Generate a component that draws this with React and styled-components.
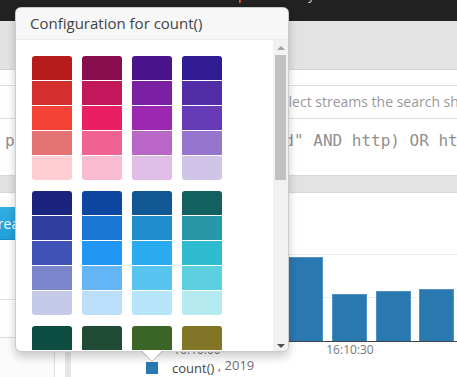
import styled, { createGlobalStyle } from "styled-components"

const palettes = [
    [
        ["#b71c1c", "#d32f2f", "#f44336", "#e57373", "#ffcdd2"],
        ["#880e4f", "#c2185b", "#e91e63", "#f06292", "#f8bbd0"],
        ["#4a148c", "#7b1fa2", "#9c27b0", "#ba68c8", "#e1bee7"],
        ["#311b92", "#512da8", "#673ab7", "#9575cd", "#d1c4e9"],
    ],
    [
        ["#1a237e", "#303f9f", "#3f51b5", "#7986cb", "#c5cae9"],
        ["#0d47a1", "#1976d2", "#2196f3", "#64b5f6", "#bbdefb"],
        ["#0f5894", "#1f8ccc", "#2aabef", "#58c4f2", "#b6e5fa"],
        ["#136060", "#2898a8", "#30bcd0", "#5ccfe0", "#b5ebf0"],
    ],
    [
        ["#0e4d41", "#00796b", "#009688", "#4db6ac", "#b2dfdb"],
        ["#204b34", "#388e3c", "#4caf50", "#81c784", "#c8e6c9"],
        ["#3a6526", "#689f38", "#8bc34a", "#aed581", "#dcedc8"],
        ["#827526", "#afb42b", "#cddc39", "#dce775", "#f0f4c3"],
    ],
    [
        ["#f57f17", "#fbc02d", "#ffeb3b", "#fff176", "#fff9c4"],
        ["#ff6f00", "#ffa000", "#ffc107", "#ffd54f", "#ffecb3"],
        ["#e65100", "#f57c00", "#ff9800", "#ffb74d", "#ffe0b2"],
        ["#bf360c", "#e64a19", "#ff5722", "#ff8a65", "#ffccbc"],
    ],
    [
        ["#3e2723", "#5d4037", "#795548", "#a1887f", "#d7ccc8"],
        ["#212121", "#616161", "#9e9e9e", "#e0e0e0", "#f5f5f5"],
        ["#263238", "#455a64", "#607d8b", "#90a4ae", "#cfd8dc"],
        ["#000000", "#424242", "#757575", "#bdbdbd", "#eeeeee"],
    ],
]

// bar x / top in chart coordinates (chart starts at x=71, y=193)
const bars = [
    { x: 85, top: 90 }, { x: 129, top: 80 }, { x: 173, top: 70 },
    { x: 217, top: 64 }, { x: 261, top: 101 }, { x: 305, top: 98 }, { x: 348, top: 96 },
]

export default function App() {
    return (
        <>
            <GlobalStyle />
            <NavBar>
                <NavLink $active style={{ marginLeft: 203 }}>Enterprise</NavLink>
                <NavLink style={{ marginLeft: 30 }}>System</NavLink>
            </NavBar>
            <Page>
                <SearchPanel>
                    <TopRow />
                    <StreamsRow>Select streams the search should include. Searches in all streams if empty.</StreamsRow>
                    <QueryRow>process:nginx OR (source:"prod" AND http) OR https</QueryRow>
                </SearchPanel>
                <Results>
                    <Sidebar>
                        <ButtonArea>
                            <CreateButton>Create new</CreateButton>
                        </ButtonArea>
                        <SideItem />
                        <SideRest />
                    </Sidebar>
                    <Gutter />
                    <ChartArea>
                        <svg width="386" height="165">
                            <line x1="0" x2="386" y1="61.5" y2="61.5" stroke="#ececec" />
                            <line x1="0" x2="386" y1="104.5" y2="104.5" stroke="#ececec" />
                            {bars.map((b) => (
                                <rect key={b.x} x={b.x + 0.5} y={b.top + 0.5} width="34" height={148 - b.top} fill="#2a78b0" stroke="#4f92c4" />
                            ))}
                            <line x1="0" x2="386" y1="148.5" y2="148.5" stroke="#444" />
                            <AxisLabel x="126" y="161" textAnchor="middle">16:10:00</AxisLabel>
                            <AxisLabel x="279" y="161" textAnchor="middle">16:10:30</AxisLabel>
                        </svg>
                        <Legend>
                            <LegendSwatch />
                            <LegendLabel>count()</LegendLabel>
                            <LegendDate>Mar 12, 2019</LegendDate>
                        </Legend>
                    </ChartArea>
                </Results>
            </Page>

            <Popover>
                <PopoverTitle>Configuration for count()</PopoverTitle>
                <PopoverBody>
                    <SwatchList>
                        {palettes.map((group, gi) => (
                            <SwatchGroup key={gi}>
                                {group.map((column, ci) => (
                                    <SwatchColumn key={ci}>
                                        {column.map((c) => <Swatch key={c} $color={c} />)}
                                    </SwatchColumn>
                                ))}
                            </SwatchGroup>
                        ))}
                    </SwatchList>
                    <ScrollTrack>
                        <ScrollButton><ScrollArrow $up /></ScrollButton>
                        <ScrollThumb />
                        <ScrollSpace />
                        <ScrollButton><ScrollArrow /></ScrollButton>
                    </ScrollTrack>
                </PopoverBody>
                <Arrow />
            </Popover>
        </>
    )
}

const GlobalStyle = createGlobalStyle`
    html, body {
        margin: 0;
        padding: 0;
        height: 100%;
        overflow: hidden;
        background: #e3e3e3;
        font-family: "Open Sans", "Noto Sans", sans-serif;
    }
`

const NavBar = styled.div`
    height: 21px;
    background: #222222;
    display: flex;
    overflow: hidden;
`

const NavLink = styled.span`
    font-size: 14px;
    line-height: 20px;
    margin-top: -16px;
    color: ${(p) => (p.$active ? "#e8913a" : "#c8c8c8")};
`

const Page = styled.div`
    padding-top: 48px;
`

const SearchPanel = styled.div`
    background: #ffffff;
    border-top: 1px solid #d4d4d4;
    border-bottom: 1px solid #d8d8d8;
`

const TopRow = styled.div`
    height: 15px;
    border-bottom: 1px solid #dddddd;
`

const StreamsRow = styled.div`
    height: 32px;
    border-bottom: 1px solid #dddddd;
    padding-left: 273px;
    font-size: 14px;
    line-height: 32px;
    color: #999999;
    white-space: nowrap;
    overflow: hidden;
`

const QueryRow = styled.div`
    height: 56px;
    padding-left: 5px;
    padding-top: 12px;
    box-sizing: border-box;
    font-family: "DejaVu Sans Mono", "Liberation Mono", monospace;
    font-size: 16px;
    color: #8f8f8f;
    white-space: nowrap;
    overflow: hidden;
`

const Results = styled.div`
    margin-top: 16px;
    background: #ffffff;
    border-top: 1px solid #d8d8d8;
    display: flex;
    height: 184px;
`

const Sidebar = styled.div`
    width: 55px;
    border-right: 1px solid #dddddd;
    display: flex;
    flex-direction: column;
    overflow: hidden;
`

const ButtonArea = styled.div`
    height: 107px;
    padding-top: 14px;
    box-sizing: border-box;
    border-bottom: 1px solid #e4e4e4;
`

const CreateButton = styled.div`
    margin-left: -18px;
    width: 120px;
    height: 33px;
    box-sizing: border-box;
    padding: 0 7px;
    background: linear-gradient(#31aee6, #209fd8);
    border-bottom: 1px solid #1b8fc4;
    border-radius: 4px;
    color: #ffffff;
    font-size: 14px;
    line-height: 33px;
    white-space: nowrap;
`

const SideItem = styled.div`
    height: 37px;
    border-bottom: 1px solid #dcdcdc;
    box-shadow: 0 3px 0 #eeeeee;
`

const SideRest = styled.div`
    flex: 1;
    background: #fbfbfb;
`

const Gutter = styled.div`
    width: 10px;
    border-right: 6px solid #e6e6e6;
`

const ChartArea = styled.div`
    flex: 1;
    display: flex;
    flex-direction: column;
`

const AxisLabel = styled.text`
    font-family: "Open Sans", sans-serif;
    font-size: 12px;
    fill: #777777;
`

const Legend = styled.div`
    display: flex;
    align-items: center;
    padding-left: 75px;
    height: 19px;
`

const LegendSwatch = styled.div`
    width: 12px;
    height: 12px;
    background: #2a78b0;
    margin-right: 14px;
`

const LegendLabel = styled.span`
    position: relative;
    z-index: 1;
    background: #ffffff;
    padding-right: 3px;
    font-size: 13px;
    color: #444444;
`

const LegendDate = styled.span`
    margin-left: -42px;
    margin-top: -5px;
    font-size: 13px;
    color: #6f6f6f;
`

const Popover = styled.div`
    position: absolute;
    left: 15px;
    top: 7px;
    width: 274px;
    box-sizing: border-box;
    background: #ffffff;
    border: 1px solid rgba(0, 0, 0, 0.2);
    border-radius: 6px;
    box-shadow: 0 5px 10px rgba(0, 0, 0, 0.2);
    z-index: 10;
`

const PopoverTitle = styled.div`
    height: 32px;
    box-sizing: border-box;
    padding: 0 14px;
    line-height: 31px;
    font-size: 15px;
    color: #444444;
    background: #f7f7f7;
    border-bottom: 1px solid #ebebeb;
    border-radius: 5px 5px 0 0;
`

const PopoverBody = styled.div`
    height: 311px;
    display: flex;
    border-radius: 0 0 5px 5px;
    overflow: hidden;
`

const SwatchList = styled.div`
    flex: 1;
    overflow: hidden;
    padding: 16px 0 0 16px;
`

const SwatchGroup = styled.div`
    display: grid;
    grid-template-columns: repeat(4, 40px);
    column-gap: 10px;
    margin-bottom: 11px;
`

const SwatchColumn = styled.div`
    display: flex;
    flex-direction: column;
    gap: 1px;
    border-radius: 3px;
    overflow: hidden;
`

const Swatch = styled.div`
    height: 24px;
    background: ${(p) => p.$color};
`

const ScrollTrack = styled.div`
    width: 15px;
    background: #f1f1f1;
    display: flex;
    flex-direction: column;
`

const ScrollButton = styled.div`
    height: 15px;
    display: flex;
    align-items: center;
    justify-content: center;
`

const ScrollArrow = styled.div`
    width: 0;
    height: 0;
    border-left: 4px solid transparent;
    border-right: 4px solid transparent;
    ${(p) => (p.$up ? "border-bottom: 4px solid #a3a3a3;" : "border-top: 4px solid #505050; margin-top: 5px;")}
`

const ScrollThumb = styled.div`
    height: 125px;
    margin: 0 2px;
    background: #c1c1c1;
`

const ScrollSpace = styled.div`
    flex: 1;
`

const Arrow = styled.div`
    position: absolute;
    left: 50%;
    bottom: -11px;
    margin-left: -11px;
    width: 0;
    height: 0;
    border: 11px solid transparent;
    border-bottom-width: 0;
    border-top-color: rgba(0, 0, 0, 0.25);
    &::after {
        content: "";
        position: absolute;
        left: -10px;
        bottom: 1px;
        border: 10px solid transparent;
        border-bottom-width: 0;
        border-top-color: #ffffff;
    }
`
